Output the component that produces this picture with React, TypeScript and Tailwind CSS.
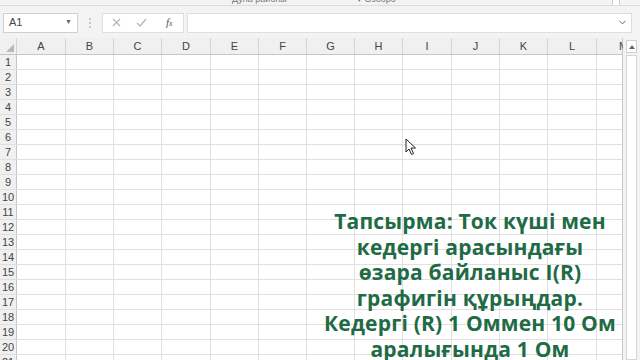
import { ChevronDown } from "lucide-react";

const cols = [
  { l: "A", w: "w-[49px]" },
  { l: "B", w: "w-[48px]" },
  { l: "C", w: "w-[48px]" },
  { l: "D", w: "w-[49px]" },
  { l: "E", w: "w-[48px]" },
  { l: "F", w: "w-[48px]" },
  { l: "G", w: "w-[48px]" },
  { l: "H", w: "w-[48px]" },
  { l: "I", w: "w-[49px]" },
  { l: "J", w: "w-[48px]" },
  { l: "K", w: "w-[48px]" },
  { l: "L", w: "w-[49px]" },
];

const rows = Array.from({ length: 21 }, (_, i) => i + 1);

export default function App() {
  return (
    <div
      className="w-[640px] h-[360px] overflow-hidden relative bg-white flex flex-col"
      style={{ fontFamily: '"Liberation Sans", Arial, sans-serif' }}
    >
      <RibbonEdge />
      <FormulaBar />
      <div className="flex flex-1 min-h-0">
        <Grid />
        <Scrollbar />
      </div>
      <Overlay />
      <Cursor />
    </div>
  );
}

const RibbonEdge = () => {
  return (
    <div className="h-[6px] bg-[#f3f3f3] border-b border-[#dcdcdc] relative overflow-hidden shrink-0">
      <span className="absolute left-[232px] top-[-7px] text-[9px] text-[#777]">Дула районы</span>
      <span className="absolute left-[357px] top-[-7px] text-[9px] text-[#777]">▾ Өзөөрө</span>
      <div className="absolute left-[612px] top-0 w-[8px] h-[5px] bg-white border-x border-[#ccc]" />
    </div>
  );
};

const FormulaBar = () => {
  return (
    <div className="h-[32px] shrink-0 bg-[#f3f3f3] flex items-center pl-[3px] pr-[8px] pt-[1px]">
      <div className="w-[75px] h-[20px] bg-white border border-[#d0d0d0] flex items-center justify-between pl-[5px] pr-[5px]">
        <span className="text-[11px] text-[#444]">A1</span>
        <span className="text-[7px] text-[#666]">▼</span>
      </div>
      <div className="w-[24px] flex justify-center">
        <div className="flex flex-col gap-[2px]">
          <div className="w-[2px] h-[2px] bg-[#c8c8c8]" />
          <div className="w-[2px] h-[2px] bg-[#c8c8c8]" />
          <div className="w-[2px] h-[2px] bg-[#c8c8c8]" />
        </div>
      </div>
      <div className="w-[82px] h-[20px] bg-white border border-[#dedede] flex items-center pl-[9px] gap-[15px]">
        <svg width="9" height="9" viewBox="0 0 9 9">
          <path d="M1 1L8 8M8 1L1 8" stroke="#b4b4b4" strokeWidth="1.2" />
        </svg>
        <svg width="11" height="9" viewBox="0 0 11 9">
          <path d="M1 5L4 8L10 1" stroke="#b4b4b4" strokeWidth="1.2" fill="none" />
        </svg>
        <span
          className="text-[11px] italic text-[#555] ml-[4px]"
          style={{ fontFamily: '"Liberation Serif", serif' }}
        >
          f<span className="text-[8px]">x</span>
        </span>
      </div>
      <div className="flex-1 h-[20px] ml-[3px] bg-white border border-[#dedede] flex items-center justify-end pr-[3px]">
        <ChevronDown size={11} color="#555" strokeWidth={2} />
      </div>
    </div>
  );
};

const Grid = () => {
  return (
    <div className="flex flex-col w-[623px] border-r border-[#c8c8c8]">
      <div className="flex h-[17px] bg-[#f0f0f0] border-b border-[#c6c6c6]">
        <div className="w-[17px] shrink-0 border-r border-[#d4d4d4] flex items-end justify-end p-[2px]">
          <svg width="8" height="8" viewBox="0 0 8 8">
            <path d="M8 0L8 8L0 8Z" fill="#b8b8b8" />
          </svg>
        </div>
        {cols.map((c) => (
          <div
            key={c.l}
            className={`${c.w} shrink-0 border-r border-[#d4d4d4] flex items-center justify-center text-[11px] text-[#444]`}
          >
            {c.l}
          </div>
        ))}
        <div className="flex-1 flex items-center justify-center text-[11px] text-[#444] pl-[22px]">M</div>
      </div>
      {rows.map((r) => (
        <div key={r} className="flex h-[15px] shrink-0 border-b border-[#e0e0e0]">
          <div className="w-[17px] shrink-0 bg-[#f0f0f0] border-r border-[#c6c6c6] flex items-center justify-center text-[11px] text-[#444]">
            {r}
          </div>
          {cols.map((c) => (
            <div key={c.l} className={`${c.w} shrink-0 border-r border-[#e0e0e0]`} />
          ))}
          <div className="flex-1" />
        </div>
      ))}
    </div>
  );
};

const Scrollbar = () => {
  return (
    <div className="flex-1 bg-[#f3f3f3] flex flex-col items-center pt-[2px]">
      <div className="w-[11px] h-[13px] bg-white border border-[#cfcfcf] flex items-center justify-center">
        <svg width="6" height="4" viewBox="0 0 6 4">
          <path d="M0 4L3 0L6 4Z" fill="#666" />
        </svg>
      </div>
      <div className="w-[11px] flex-1 mt-[2px] bg-white border border-[#d6d6d6]" />
    </div>
  );
};

const Overlay = () => {
  return (
    <div
      className="absolute left-[310px] top-[209px] w-[320px] text-center text-[21px] tracking-[0.2px] leading-[25.5px] font-bold text-[#1f6b45]"
      style={{ fontFamily: '"Open Sans", "Noto Sans", sans-serif' }}
    >
      <p>Тапсырма: Ток күші мен</p>
      <p>кедергі арасындағы</p>
      <p>өзара байланыс I(R)</p>
      <p>графигін құрыңдар.</p>
      <p>Кедергі (R) 1 Оммен 10 Ом</p>
      <p>аралығында 1 Ом</p>
    </div>
  );
};

const Cursor = () => {
  return (
    <svg className="absolute left-[405px] top-[138px]" width="12" height="18" viewBox="0 0 12 18">
      <path d="M1 1L1 14L4 11L6.5 16.5L8.5 15.5L6 10L10.5 10Z" fill="white" stroke="#222" strokeWidth="1" />
    </svg>
  );
};
